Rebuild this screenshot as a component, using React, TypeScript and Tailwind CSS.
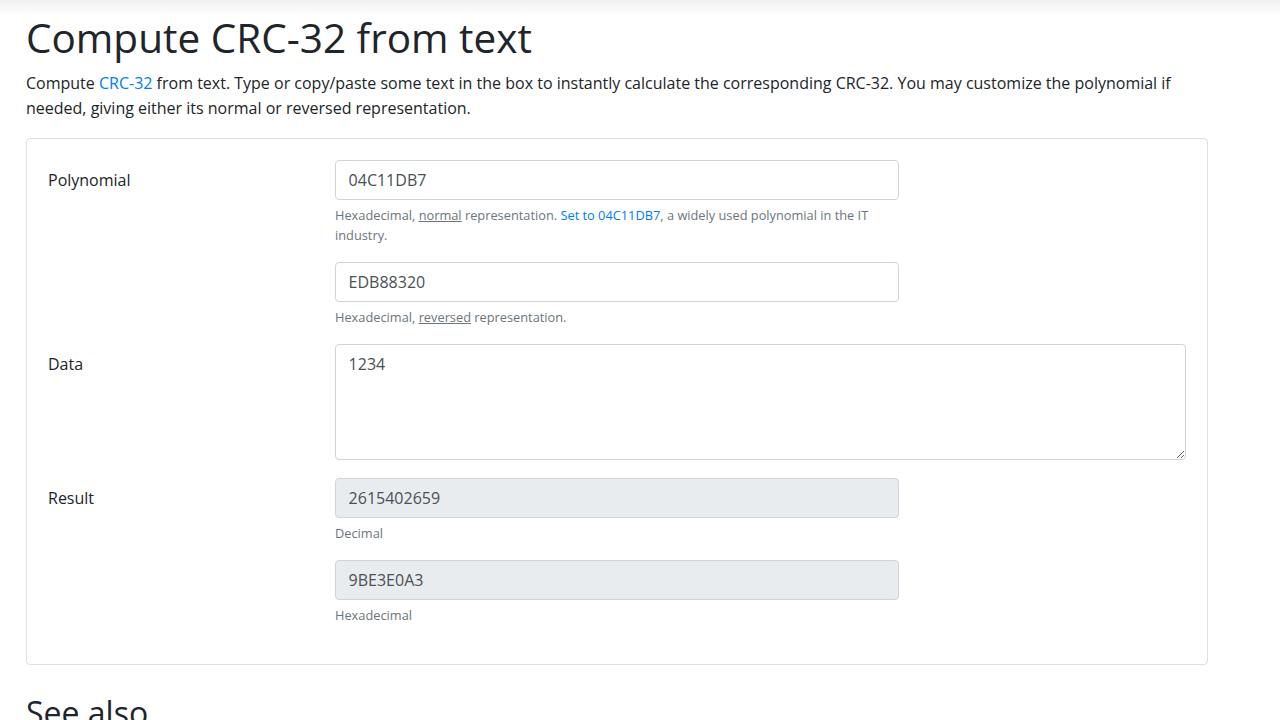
import React from "react";

const font = { fontFamily: '"Open Sans", "Noto Sans", sans-serif' };

function Help({ children }: { children: React.ReactNode }) {
    return <div className="mt-[5px] text-[12.8px] leading-[20px] text-[#6c757d]">{children}</div>;
}

function Field({ value, readOnly = false }: { value: string; readOnly?: boolean }) {
    return (
        <input
            defaultValue={value}
            readOnly={readOnly}
            className={
                "block w-[564px] h-[40px] rounded-[4px] border border-[#ced4da] px-[12.6px] text-[16px] text-[#495057] outline-none " +
                (readOnly ? "bg-[#e9ecef]" : "bg-white")
            }
        />
    );
}

function Row({ label, children, className = "" }: { label: string; children: React.ReactNode; className?: string }) {
    return (
        <div className={"flex " + className}>
            <div className="w-[287px] shrink-0 pt-[8px] leading-[25px]">{label}</div>
            <div className="flex-1 flex flex-col gap-[17px]">{children}</div>
        </div>
    );
}

export default function App() {
    return (
        <div className="min-h-screen bg-white text-[#212529] text-[16px] leading-[25.2px]" style={font}>
            {/* ombre de la barre du haut */}
            <div className="fixed top-0 left-0 right-0 h-[16px] bg-gradient-to-b from-black/[0.06] to-transparent pointer-events-none" />

            <div className="w-[1182px] ml-[26px] pt-[13px]">
                <h1 className="text-[40.5px] leading-[50px] font-normal mb-[8px]">Compute CRC-32 from text</h1>
                <p className="mb-[17px]">
                    Compute <a href="#" className="text-[#007bff]">CRC-32</a> from text. Type or copy/paste some text in the box to instantly calculate the corresponding CRC-32. You may customize the polynomial if needed, giving either its normal or reversed representation.
                </p>

                <div className="border border-black/[0.125] rounded-[4px] px-[21px] pt-[21px] pb-[4px]">
                    <Row label="Polynomial" className="mb-[17px]">
                        <div>
                            <Field value="04C11DB7" />
                            <Help>
                                <div className="w-[564px]">
                                    Hexadecimal, <u>normal</u> representation.{" "}
                                    <a href="#" className="text-[#007bff]">Set to 04C11DB7</a>, a widely used polynomial in the IT industry.
                                </div>
                            </Help>
                        </div>
                        <div>
                            <Field value="EDB88320" />
                            <Help>
                                Hexadecimal, <u>reversed</u> representation.
                            </Help>
                        </div>
                    </Row>
                    <Row label="Data" className="mt-[4px] mb-[18px]">
                        <textarea
                            defaultValue="1234"
                            className="block w-full h-[116px] rounded-[4px] border border-[#ced4da] px-[12.6px] py-[7px] text-[16px] leading-[25.2px] text-[#495057] outline-none"
                        />
                    </Row>
                    <Row label="Result" className="mb-[35px]">
                        <div>
                            <Field value="2615402659" readOnly />
                            <Help>Decimal</Help>
                        </div>
                        <div>
                            <Field value="9BE3E0A3" readOnly />
                            <Help>Hexadecimal</Help>
                        </div>
                    </Row>
                </div>

                <h2 className="mt-[28px] text-[32px] leading-[40px] font-normal">See also</h2>
            </div>
        </div>
    );
}
